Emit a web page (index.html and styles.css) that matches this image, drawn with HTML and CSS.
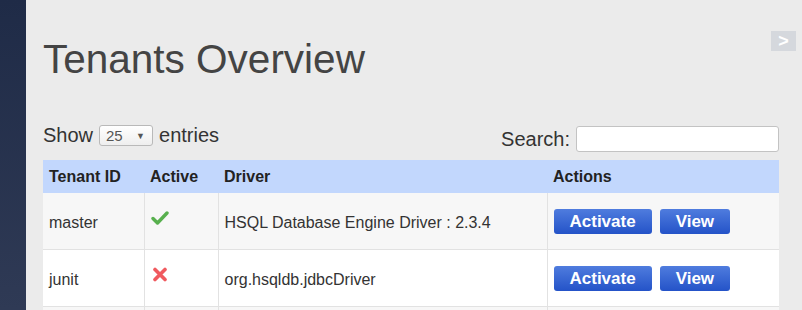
FILE: index.html
```html
<!DOCTYPE html>
<html>
<head>
<meta charset="utf-8">
<link rel="stylesheet" href="styles.css">
</head>
<body>
<div class="layout">
  <aside class="sidebar"></aside>
  <main class="main">
    <button class="toggle" type="button">&gt;</button>
    <h1 class="title">Tenants Overview</h1>
    <div class="controls">
      <label class="length">Show <span class="select"><span class="select-value">25</span><span class="select-arrow">▼</span></span> entries</label>
      <label class="search">Search: <input class="search-input" type="text"></label>
    </div>
    <table class="grid">
      <thead>
        <tr>
          <th class="c-id">Tenant ID</th>
          <th class="c-active">Active</th>
          <th class="c-driver">Driver</th>
          <th class="c-actions">Actions</th>
        </tr>
      </thead>
      <tbody>
        <tr class="odd">
          <td>master</td>
          <td class="icon-cell"><svg class="ico" width="18" height="16" viewBox="0 0 18 16"><path d="M2 8.5 L6.5 13 L16 3" fill="none" stroke="#58b04e" stroke-width="3.4" stroke-linecap="round" stroke-linejoin="round"/></svg></td>
          <td>HSQL Database Engine Driver : 2.3.4</td>
          <td class="actions"><button class="btn">Activate</button><button class="btn">View</button></td>
        </tr>
        <tr class="even">
          <td>junit</td>
          <td class="icon-cell"><svg class="ico" width="18" height="16" viewBox="0 0 18 16"><path d="M4 2.5 L14 12.5 M14 2.5 L4 12.5" fill="none" stroke="#f05a5f" stroke-width="3.6" stroke-linecap="round"/></svg></td>
          <td>org.hsqldb.jdbcDriver</td>
          <td class="actions"><button class="btn">Activate</button><button class="btn">View</button></td>
        </tr>
        <tr class="odd">
          <td>&nbsp;</td><td></td><td></td><td></td>
        </tr>
      </tbody>
    </table>
  </main>
</div>
</body>
</html>
```
FILE: styles.css
```css
html, body {
  margin: 0;
  padding: 0;
  height: 100%;
  overflow: hidden;
}
body {
  font-family: "Liberation Sans", Arial, sans-serif;
  color: #333;
  background: #ebebeb;
}
.layout {
  display: flex;
  height: 310px;
  overflow: hidden;
}
.sidebar {
  width: 26px;
  flex: none;
  background: linear-gradient(#1f2b47, #2f3a55);
}
.main {
  position: relative;
  flex: 1;
  padding: 0 23px 0 17px;
}
.toggle {
  position: absolute;
  top: 31px;
  right: 6px;
  width: 25px;
  height: 20px;
  border: 0;
  padding: 0;
  background: #d5d8dd;
  color: #fff;
  font: bold 18px/20px "Liberation Sans", Arial, sans-serif;
}
.title {
  margin: 0;
  padding-top: 36px;
  font-size: 40.5px;
  font-weight: normal;
  line-height: 46px;
  color: #444;
}
.controls {
  display: flex;
  justify-content: space-between;
  align-items: flex-end;
  margin-top: 42px;
  height: 36px;
  font-size: 20px;
  color: #333;
}
.length {
  display: flex;
  align-items: center;
  gap: 6px;
  align-self: flex-start;
}
.select {
  display: inline-flex;
  align-items: center;
  justify-content: space-between;
  box-sizing: border-box;
  width: 54px;
  height: 21px;
  padding: 0 7px 0 6px;
  border: 1px solid #b9b9b9;
  border-radius: 3px;
  background: linear-gradient(#fff, #eee);
  font-size: 15px;
  color: #555;
}
.select-arrow {
  font-size: 9px;
  color: #555;
}
.search {
  display: flex;
  align-items: center;
  gap: 6px;
  padding-bottom: 8px;
}
.search-input {
  box-sizing: border-box;
  width: 203px;
  height: 26px;
  border: 1px solid #c3c3c3;
  border-radius: 3px;
  background: #fff;
  margin: 0;
}
.grid {
  width: 736px;
  border-collapse: collapse;
  font-size: 16px;
  color: #333;
}
.grid th {
  background: #c2d7fd;
  text-align: left;
  font-weight: bold;
  font-size: 16px;
  color: #222;
  height: 33px;
  padding: 0 6px;
}
.grid td {
  height: 52px;
  padding: 4px 6px 0;
  border: 1px solid #e2e2e2;
  border-top: 0;
  border-left: 0;
}
.grid td.actions { padding-top: 1px; height: 55px; }
.grid td:last-child { border-right: 0; }
.grid th.c-id { width: 89px; }
.grid th.c-active { width: 62px; }
.grid th.c-driver { width: 317px; }
.odd td { background: #f7f7f7; }
.even td { background: #fff; }
.icon-cell { vertical-align: middle; }
.ico { display: block; margin-top: -11px; margin-left: 0; }
.actions { white-space: nowrap; }
.btn {
  height: 25px;
  padding: 0 16px;
  margin: 0 8px 0 0;
  border: 0;
  border-radius: 3px;
  background: linear-gradient(#4f7cde, #2453c8);
  color: #fff;
  font: bold 17px "Liberation Sans", Arial, sans-serif;
  vertical-align: middle;
}
```
